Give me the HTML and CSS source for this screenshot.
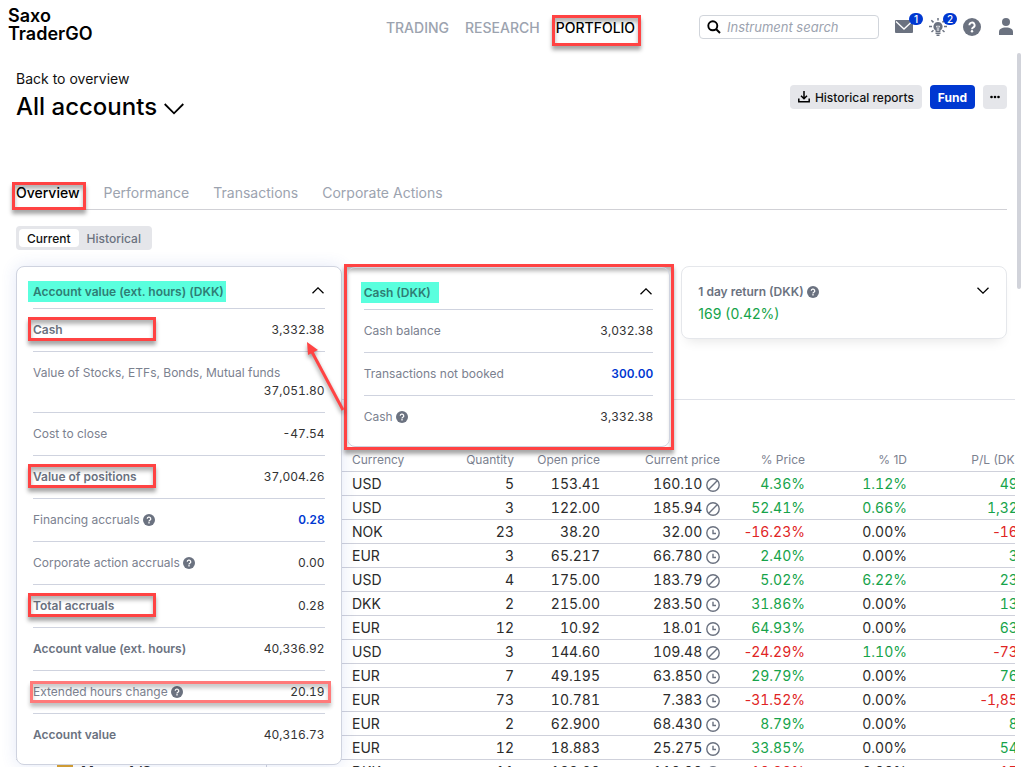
FILE: index.html
```html
<!DOCTYPE html>
<html lang="en">

<head>
    <meta charset="UTF-8">
    <meta name="viewport" content="width=device-width, initial-scale=1.0">
    <title>Saxo TraderGO - Portfolio</title>
    <link rel="stylesheet" href="styles.css">
</head>

<body>
    <!-- Shared icons -->
    <svg class="sprite" aria-hidden="true">
        <symbol id="help" viewBox="0 0 18 18">
            <circle cx="9" cy="9" r="9" fill="#6b7280" />
            <path d="M6.4 7.2a2.6 2.6 0 1 1 3.9 2.2c-.9.5-1.3.9-1.3 1.8" fill="none" stroke="#fff" stroke-width="1.9" />
            <circle cx="9" cy="13.3" r="1.2" fill="#fff" />
        </symbol>
        <symbol id="up" viewBox="0 0 12 7">
            <path d="M.5 6.3 6 .9l5.500 5.400" fill="none" stroke="#000" stroke-width="1.3" />
        </symbol>
        <symbol id="down" viewBox="0 0 12 7">
            <path d="M.5.7 6 6.100 11.500.7" fill="none" stroke="#000" stroke-width="1.3" />
        </symbol>
        <symbol id="closed" viewBox="0 0 14 14">
            <circle cx="7" cy="7" r="6.200" fill="none" stroke="#6b7280" stroke-width="1.400" />
            <path d="M2.800 11.200 11.200 2.800" stroke="#6b7280" stroke-width="1.400" />
        </symbol>
        <symbol id="clock" viewBox="0 0 14 14">
            <circle cx="7" cy="7" r="6.200" fill="none" stroke="#6b7280" stroke-width="1.400" />
            <path d="M7 3.800V7.500h3" fill="none" stroke="#6b7280" stroke-width="1.400" />
        </symbol>
    </svg>

    <header class="topbar">
        <a class="logo" href="#">Saxo<br>TraderGO</a>
        <nav class="menu">
            <a href="#">TRADING</a>
            <a href="#">RESEARCH</a>
            <a href="#" class="active mark mark-menu">PORTFOLIO</a>
        </nav>
        <div class="tools">
            <label class="search">
                <svg width="14" height="14" viewBox="0 0 14 14"><circle cx="5.800" cy="5.800" r="4.500" fill="none" stroke="#000" stroke-width="1.900" /><path d="m9 9 4 4" stroke="#000" stroke-width="2" /></svg>
                <input type="text" placeholder="Instrument search" aria-label="Instrument search">
            </label>
            <button class="icon-btn mail" aria-label="Messages">
                <svg width="18" height="13" viewBox="0 0 18 13"><rect width="18" height="13" rx="1" fill="#6b7280" /><path d="m1 1.500 8 7.500 8-7.500" fill="none" stroke="#fff" stroke-width="1.300" /></svg>
                <span class="badge">1</span>
            </button>
            <button class="icon-btn ideas" aria-label="Ideas">
                <svg width="18" height="18" viewBox="0 0 18 18">
                    <path d="M9 4a4.600 4.600 0 0 0-2.400 8.500V14h4.800v-1.500A4.600 4.600 0 0 0 9 4z" fill="#6b7280" />
                    <path d="M7.300 8 8.300 10v3M10.700 8l-1 2v3M7.300 8.200h3.400" fill="none" stroke="#fff" stroke-width=".7" />
                    <path d="M6.500 15.300h5M7.500 17.200h3M0 8.500h3M15 8.500h3M2.300 2.200l2.200 2.200M15.700 2.200l-2.200 2.200M9 0v2.500M2.500 14l2-1.800M15.500 14l-2-1.800" stroke="#6b7280" stroke-width="1.500" />
                </svg>
                <span class="badge">2</span>
            </button>
            <button class="icon-btn" aria-label="Help"><svg width="18" height="18"><use href="#help" /></svg></button>
            <button class="icon-btn user" aria-label="Account">
                <svg width="14" height="17" viewBox="0 0 14 17"><circle cx="7" cy="4" r="4" fill="#6b7280" /><path d="M0 17v-3c0-3 2.500-4.500 7-4.500s7 1.500 7 4.500v3z" fill="#6b7280" /></svg>
            </button>
        </div>
    </header>

    <main>
        <div class="page-head">
            <div>
                <a class="back" href="#">Back to overview</a>
                <h1>All accounts <svg width="20" height="12" viewBox="0 0 20 12"><path d="m.7 1 9.300 9.300L19.300 1" fill="none" stroke="#000" stroke-width="1.800" /></svg></h1>
            </div>
            <div class="actions">
                <button class="btn">
                    <svg width="12" height="12" viewBox="0 0 12 12"><path d="M6 0v7M3 4.800l3 3 3-3M.8 7.500v3.300h10.400V7.500" fill="none" stroke="#000" stroke-width="1.500" /></svg>
                    Historical reports
                </button>
                <button class="btn btn-primary">Fund</button>
                <button class="btn btn-more" aria-label="More">
                    <svg width="10" height="4" viewBox="0 0 10 4"><circle cx="1.500" cy="2" r="1.300" /><circle cx="5" cy="2" r="1.300" /><circle cx="8.500" cy="2" r="1.300" /></svg>
                </button>
            </div>
        </div>

        <nav class="tabs">
            <a href="#" class="active mark mark-tab">Overview</a>
            <a href="#">Performance</a>
            <a href="#">Transactions</a>
            <a href="#">Corporate Actions</a>
        </nav>

        <div class="toggle">
            <button class="selected">Current</button>
            <button>Historical</button>
        </div>

        <!-- Summary cards, the open ones drop over the positions list -->
        <div class="cards">
            <div class="slot">
                <section class="card open">
                    <div class="card-head">
                        <h2><span class="highlight">Account value (ext. hours) (DKK)</span></h2>
                        <button class="icon-btn" aria-label="Collapse"><svg width="12" height="7"><use href="#up" /></svg></button>
                    </div>
                    <dl>
                        <div><dt class="strong mark mark-row">Cash</dt><dd>3,332.38</dd></div>
                        <div><dt>Value of Stocks, ETFs, Bonds, Mutual funds</dt><dd>37,051.80</dd></div>
                        <div><dt>Cost to close</dt><dd>-47.54</dd></div>
                        <div><dt class="strong mark mark-row">Value of positions</dt><dd>37,004.26</dd></div>
                        <div><dt>Financing accruals <svg width="12" height="12"><use href="#help" /></svg></dt><dd><a href="#">0.28</a></dd></div>
                        <div><dt>Corporate action accruals <svg width="12" height="12"><use href="#help" /></svg></dt><dd>0.00</dd></div>
                        <div><dt class="strong mark mark-row">Total accruals</dt><dd>0.28</dd></div>
                        <div><dt class="strong">Account value (ext. hours)</dt><dd>40,336.92</dd></div>
                        <div class="mark mark-soft"><dt>Extended hours change <svg width="12" height="12"><use href="#help" /></svg></dt><dd>20.19</dd></div>
                        <div><dt class="strong">Account value</dt><dd>40,316.73</dd></div>
                    </dl>
                </section>
                <svg class="arrow" width="42" height="74" viewBox="0 0 42 74">
                    <path d="M39 69 8 11" stroke="#ff4343" stroke-width="3" />
                    <path d="M3 1 14 9 4 14z" fill="#ff4343" />
                </svg>
            </div>

            <div class="slot">
                <div class="callout">
                    <section class="card">
                        <div class="card-head">
                            <h2><span class="highlight">Cash (DKK)</span></h2>
                            <button class="icon-btn" aria-label="Collapse"><svg width="12" height="7"><use href="#up" /></svg></button>
                        </div>
                        <dl>
                            <div><dt>Cash balance</dt><dd>3,032.38</dd></div>
                            <div><dt>Transactions not booked</dt><dd><a href="#">300.00</a></dd></div>
                            <div><dt>Cash <svg width="12" height="12"><use href="#help" /></svg></dt><dd>3,332.38</dd></div>
                        </dl>
                    </section>
                </div>
            </div>

            <section class="card closed">
                <div class="card-head">
                    <h2>1 day return (DKK) <svg width="12" height="12"><use href="#help" /></svg></h2>
                    <button class="icon-btn" aria-label="Expand"><svg width="12" height="7"><use href="#down" /></svg></button>
                </div>
                <p class="return">169 (0.42%)</p>
            </section>
        </div>

        <div class="positions">
            <table>
                <colgroup>
                    <col class="c-name"><col class="c-status"><col class="c-currency"><col class="c-quantity"><col class="c-open">
                    <col class="c-current"><col class="c-price"><col class="c-day"><col class="c-pl">
                </colgroup>
                <thead>
                    <tr>
                        <th></th><th></th><th class="left">Currency</th><th>Quantity</th><th>Open price</th>
                        <th>Current price</th><th>% Price</th><th>% 1D</th><th>P/L (DKK)</th>
                    </tr>
                </thead>
                <tbody id="rows"></tbody>
            </table>
        </div>
    </main>
    <div class="scrollbar"></div>

    <script>
        // currency, quantity, open, current, market icon, % price, % 1D, P/L, name
        const positions = [
            ["USD", "5", "153.41", "160.10", "closed", "4.36%", "1.12%", "490"],
            ["USD", "3", "122.00", "185.94", "closed", "52.41%", "0.66%", "1,320"],
            ["NOK", "23", "38.20", "32.00", "clock", "-16.23%", "0.00%", "-160"],
            ["EUR", "3", "65.217", "66.780", "clock", "2.40%", "0.00%", "30"],
            ["USD", "4", "175.00", "183.79", "closed", "5.02%", "6.22%", "230"],
            ["DKK", "2", "215.00", "283.50", "clock", "31.86%", "0.00%", "130"],
            ["EUR", "12", "10.92", "18.01", "clock", "64.93%", "0.00%", "630"],
            ["USD", "3", "144.60", "109.48", "closed", "-24.29%", "1.10%", "-730"],
            ["EUR", "7", "49.195", "63.850", "clock", "29.79%", "0.00%", "760"],
            ["EUR", "73", "10.781", "7.383", "clock", "-31.52%", "0.00%", "-1,850"],
            ["EUR", "2", "62.900", "68.430", "clock", "8.79%", "0.00%", "80"],
            ["EUR", "12", "18.883", "25.275", "clock", "33.85%", "0.00%", "540"],
            ["DKK", "11", "122.60", "110.00", "clock", "-10.28%", "0.00%", "-170", "Matas A/S"]
        ];

        function tone(value) {
            if (value.startsWith("-")) return "down";
            return value === "0.00%" ? "" : "up";
        }

        // Only the digits are tabular, signs keep their own width
        function signed(value) {
            return value.replace(/[-%]/g, '<span class="sign">$&</span>');
        }

        document.getElementById("rows").innerHTML = positions.map(p => `
            <tr>
                <td class="name">${p[8] ? `<span class="flag"></span>${p[8]}` : ""}</td>
                <td></td>
                <td class="left">${p[0]}</td>
                <td>${p[1]}</td>
                <td>${p[2]}</td>
                <td>${p[3]} <svg width="14" height="14"><use href="#${p[4]}" /></svg></td>
                <td class="${tone(p[5])}">${signed(p[5])}</td>
                <td class="${tone(p[6])}">${signed(p[6])}</td>
                <td class="${tone(p[7])}">${signed(p[7])}</td>
            </tr>`).join("");
    </script>
</body>

</html>
```
FILE: styles.css
```css
*,
*::after {
    margin: 0;
    padding: 0;
    box-sizing: border-box;
}

body {
    display: flex;
    flex-direction: column;
    height: 100vh;
    padding-bottom: 2px;
    overflow: hidden;
    position: relative;
    background: #fff;
    color: #111;
    font-family: Inter, "Liberation Sans", sans-serif;
    font-size: 14px;
}

a {
    color: inherit;
    text-decoration: none;
}

button {
    border: none;
    background: none;
    font: inherit;
    cursor: pointer;
}

.sprite {
    position: absolute;
    width: 0;
    height: 0;
}

/* Top bar */
.topbar {
    flex: none;
    display: grid;
    grid-template-columns: 1fr auto 1fr;
    height: 53px;
    padding: 0 9px 0 8px;
}

.logo {
    margin-top: 7px;
    color: #000;
    font-size: 18px;
    font-weight: 600;
    line-height: 18px;
}

.menu {
    display: flex;
    align-items: flex-start;
    gap: 16px;
    padding-top: 18px;
    color: #9ca3af;
    font-weight: 500;
    line-height: 20px;
}

.active {
    color: #000;
}

.tools {
    display: flex;
    align-items: center;
    justify-content: flex-end;
    height: 53px;
}

.search {
    display: flex;
    align-items: center;
    gap: 6px;
    width: 180px;
    height: 24px;
    margin-right: 16px;
    padding: 0 8px 0 7px;
    border: 1px solid #d1d5db;
    border-radius: 4px;
}

.search input {
    flex: 1;
    min-width: 0;
    border: none;
    outline: none;
    background: none;
    font: italic 13px Inter, "Liberation Sans", sans-serif;
}

.search input::placeholder {
    color: #9ca3af;
}

.icon-btn {
    display: flex;
    position: relative;
}

.mail,
.ideas {
    margin-right: 16px;
}

.user {
    margin-left: 18px;
}

/* Notification count over the icon */
.badge {
    position: absolute;
    left: 14px;
    bottom: 8px;
    width: 14px;
    height: 12px;
    border-radius: 6px;
    background: #0038d1;
    color: #fff;
    font-size: 10px;
    font-weight: 500;
    line-height: 12px;
    text-align: center;
}

.ideas .badge {
    bottom: 11px;
}

/* Page heading */
main {
    flex: 1;
    min-height: 0;
    margin-right: 7px;
    padding: 17px 0 0 16px;
    overflow: hidden;
}

.page-head {
    display: flex;
    justify-content: space-between;
    align-items: flex-start;
    margin-right: 8px;
}

.back {
    display: block;
    margin-bottom: 5px;
    font-size: 14px;
    line-height: 18px;
}

h1 {
    color: #000;
    font-size: 24px;
    font-weight: 500;
    line-height: 28px;
}

.actions {
    display: flex;
    gap: 8px;
    margin-top: 15px;
}

.btn {
    display: flex;
    align-items: center;
    gap: 5px;
    height: 24px;
    padding: 0 8px;
    border-radius: 4px;
    background: #e5e6ea;
    color: #111;
    font-size: 12px;
    font-weight: 500;
}

.btn-primary {
    background: #0038d1;
    color: #fff;
    font-weight: 700;
}

.btn-more {
    padding: 0 7px;
}

/* Tabs */
.tabs {
    display: flex;
    gap: 24px;
    margin: 62px 8px 16px 0;
    padding-bottom: 6px;
    border-bottom: 1px solid #d1d1d6;
    color: #9ca3af;
    line-height: 20px;
}

.tabs .active {
    font-weight: 500;
}

.toggle {
    display: inline-flex;
    padding: 3px;
    border-radius: 4px;
    background: #e5e6ea;
}

.toggle button {
    height: 18px;
    padding: 0 8px;
    border-radius: 4px;
    color: #6b7280;
    font-size: 12px;
    font-weight: 500;
}

.toggle .selected {
    background: #fff;
    color: #111;
}

/* Summary cards */
.cards {
    display: grid;
    grid-template-columns: repeat(3, 1fr);
    gap: 7px;
    margin: 16px 8px 60px 0;
}

.slot {
    position: relative;
}

.card {
    padding: 0 16px 8px;
    border: 1px solid #cfd3df;
    border-radius: 8px;
    background: #fff;
}

.card.open {
    position: absolute;
    top: 0;
    left: 0;
    right: 0;
    z-index: 1;
    box-shadow: 0 0 16px rgba(60, 90, 200, 0.14);
}

.card.closed {
    height: 73px;
    border-color: #e5e7eb;
    box-shadow: 0 8px 12px -6px rgba(0, 0, 0, 0.1);
}

.card-head {
    display: flex;
    justify-content: space-between;
    align-items: center;
    height: 42px;
    padding-top: 8px;
    border-bottom: 1px solid #cfd3df;
}

.closed .card-head {
    height: 34px;
    padding-top: 15px;
    border: none;
}

h2 {
    color: #6b7280;
    font-size: 12px;
    font-weight: 600;
    line-height: 21px;
}

h2 svg,
dt svg {
    vertical-align: -2px;
}

.highlight {
    display: block;
    margin-left: -5px;
    padding: 0 2px 0 5px;
    background: #5affde;
    color: #2f7d74;
}

.card-head .icon-btn {
    margin: 0 1px 2px 0;
}

dl > div {
    display: flex;
    flex-wrap: wrap;
    padding: 12px 0;
    border-bottom: 1px solid #cfd3df;
    line-height: 18px;
}

dl > div:last-child {
    border-bottom: none;
}

dt {
    color: #7b818f;
    font-size: 12px;
}

dt.strong {
    color: #6b7280;
    font-weight: 600;
}

dd {
    margin-left: auto;
    color: #333;
    font-size: 12px;
    font-variant-numeric: tabular-nums;
}

dd a {
    color: #0038d1;
    font-weight: 600;
}

.return {
    padding-top: 3px;
    color: #16a34a;
    font-size: 14px;
    line-height: 20px;
}

/* Red frames drawn over the page */
.mark {
    position: relative;
}

.mark::after,
.callout {
    position: absolute;
    border: 3px solid #ff4343;
    box-shadow: 0 4px 4px rgba(0, 0, 0, 0.35), inset 0 4px 4px rgba(0, 0, 0, 0.3);
}

.mark::after {
    content: "";
}

.mark-menu::after {
    inset: -3px -6px -8px -4px;
}

.mark-tab::after {
    inset: -1px -6px -7px -4px;
}

.mark-row::after {
    top: -4px;
    left: -5px;
    width: 128px;
    height: 24px;
}

.mark-soft::after {
    inset: 10px -6px 10px -3px;
    opacity: 0.7;
}

.callout {
    top: -2px;
    left: -5px;
    right: 0;
    z-index: 2;
    padding-right: 1px;
    background: #fff;
}

.callout .card {
    background: none;
}

.callout .highlight {
    margin-left: -3px;
    padding: 0 8px 0 3px;
}

.arrow {
    position: absolute;
    top: 75px;
    left: 288px;
    z-index: 3;
    filter: drop-shadow(0 3px 2px rgba(0, 0, 0, 0.4));
}

/* Positions list */
.positions {
    padding-top: 48px;
    border-top: 1px solid #dfe1e8;
}

table {
    table-layout: fixed;
    width: 1021px;
    border-spacing: 0;
    font-variant-numeric: tabular-nums;
}

.c-name { width: 251px; }
.c-status { width: 75px; }
.c-currency { width: 92px; }
.c-quantity { width: 90px; }
.c-open { width: 86px; }
.c-current { width: 120px; }
.c-price { width: 85px; }
.c-day { width: 102px; }
.c-pl { width: 120px; }

th,
td {
    height: 24px;
    padding: 0 10px;
    border-bottom: 1px solid #cfd1db;
    line-height: 20px;
    text-align: right;
    white-space: nowrap;
}

th {
    color: #7b818f;
    font-size: 12px;
    font-weight: 400;
    font-variant-numeric: normal;
}

td {
    color: #2b2b2b;
}

.sign {
    font-variant-numeric: normal;
}

.left {
    text-align: left;
}

td svg {
    vertical-align: -3px;
}

.name {
    padding-left: 41px;
    border-right: 1px solid #cfd1db;
    font-weight: 600;
    text-align: left;
}

.flag {
    display: inline-block;
    width: 16px;
    height: 12px;
    margin-right: 8px;
    background: #d9a02c;
}

.up {
    color: #16a34a;
}

.down {
    color: #e02424;
}

/* Scroll thumb over the right edge */
.scrollbar {
    position: absolute;
    top: 53px;
    right: 1px;
    width: 4px;
    height: 236px;
    border-radius: 2px;
    background: #d1d3da;
}
```
